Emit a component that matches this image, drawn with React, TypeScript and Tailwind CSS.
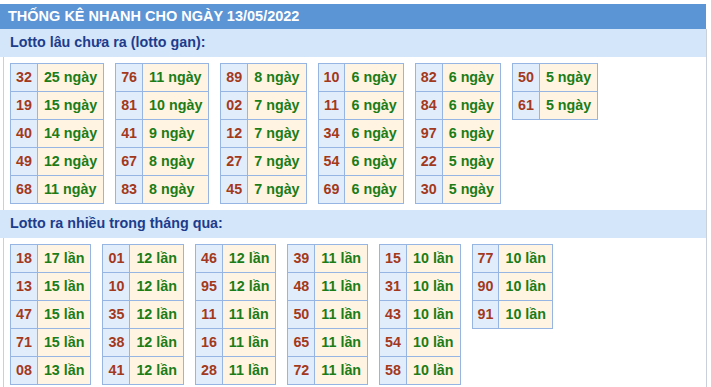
const gan: [string, string][][] = [
  [["32", "25"], ["19", "15"], ["40", "14"], ["49", "12"], ["68", "11"]],
  [["76", "11"], ["81", "10"], ["41", "9"], ["67", "8"], ["83", "8"]],
  [["89", "8"], ["02", "7"], ["12", "7"], ["27", "7"], ["45", "7"]],
  [["10", "6"], ["11", "6"], ["34", "6"], ["54", "6"], ["69", "6"]],
  [["82", "6"], ["84", "6"], ["97", "6"], ["22", "5"], ["30", "5"]],
  [["50", "5"], ["61", "5"]],
];

const nhieu: [string, string][][] = [
  [["18", "17"], ["13", "15"], ["47", "15"], ["71", "15"], ["08", "13"]],
  [["01", "12"], ["10", "12"], ["35", "12"], ["38", "12"], ["41", "12"]],
  [["46", "12"], ["95", "12"], ["11", "11"], ["16", "11"], ["28", "11"]],
  [["39", "11"], ["48", "11"], ["50", "11"], ["65", "11"], ["72", "11"]],
  [["15", "10"], ["31", "10"], ["43", "10"], ["54", "10"], ["58", "10"]],
  [["77", "10"], ["90", "10"], ["91", "10"]],
];

function LotoTable({ rows, unit }: { rows: [string, string][]; unit: string }) {
  return (
    <table className="border-collapse self-start">
      <tbody>
        {rows.map(([num, count]) => (
          <tr key={num} className="h-[28px]">
            <td className="border border-[#97b5e2] bg-[#e2edfb] px-[5px] text-center text-[#a3391c]">
              {num}
            </td>
            <td className="border border-[#97b5e2] bg-[#fff4e2] px-[6px] text-left text-[#1b7c18]">
              {count} {unit}
            </td>
          </tr>
        ))}
      </tbody>
    </table>
  );
}

function Section({ title, tables, unit }: { title: string; tables: [string, string][][]; unit: string }) {
  return (
    <div>
      <div className="-ml-[4px] flex h-[28px] items-center bg-[#d4e6f9] pl-[10px] text-[#1d3c8c]">
        {title}
      </div>
      <div className="flex gap-x-[11px] py-[6px] pl-[6px]">
        {tables.map((t, i) => (
          <LotoTable key={i} rows={t} unit={unit} />
        ))}
      </div>
    </div>
  );
}

export default function App() {
  return (
    <div className="w-[707px] bg-white pt-[4px] font-['Liberation_Sans',Arial,sans-serif] text-[14.3px] font-bold">
      <div className="flex h-[25px] w-[706px] items-center bg-[#5b95d5] pl-[8px] text-[14.5px] text-white">
        THỐNG KÊ NHANH CHO NGÀY 13/05/2022
      </div>
      <div className="ml-[3px] border-x border-[#c9d0da]">
        <Section title="Lotto lâu chưa ra (lotto gan):" tables={gan} unit="ngày" />
        <Section title="Lotto ra nhiều trong tháng qua:" tables={nhieu} unit="lần" />
      </div>
    </div>
  );
}
